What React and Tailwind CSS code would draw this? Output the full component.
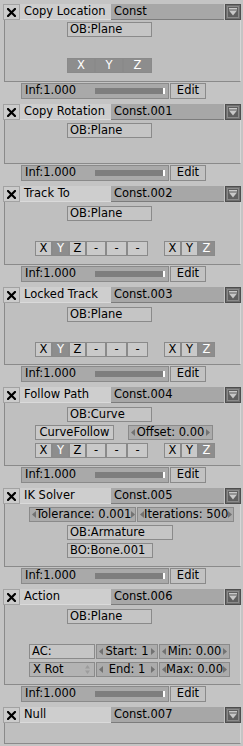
import React from "react";

const XIcon = () => (
  <svg width="9" height="9" viewBox="0 0 9 9">
    <path d="M1 1 L8 8 M8 1 L1 8" stroke="#000" strokeWidth="2.2" strokeLinecap="square" />
  </svg>
);

const DropIcon = () => (
  <svg width="16" height="16" viewBox="0 0 16 16">
    <rect x="0.5" y="0.5" width="15" height="15" fill="#6e6e6e" stroke="#4e4e4e" />
    <rect x="2.5" y="2.5" width="11" height="11" fill="#5f5f5f" stroke="#8a8a8a" />
    <rect x="4" y="4" width="8" height="1.5" fill="#c8c8c8" />
    <path d="M4 6.5 H12 L8 11.5 Z" fill="#c8c8c8" />
  </svg>
);

const ArrowL = () => (
  <svg width="4" height="7" viewBox="0 0 4 7" className="shrink-0">
    <path d="M4 0 V7 L0 3.5 Z" fill="#727272" />
  </svg>
);

const ArrowR = () => (
  <svg width="4" height="7" viewBox="0 0 4 7" className="shrink-0">
    <path d="M0 0 V7 L4 3.5 Z" fill="#727272" />
  </svg>
);

const UpDown = () => (
  <svg width="5" height="9" viewBox="0 0 5 9" className="shrink-0">
    <path d="M0 3.5 H5 L2.5 0 Z M0 5.5 H5 L2.5 9 Z" fill="#9c9c9c" />
  </svg>
);

function Header({ name, cname }) {
  return (
    <div className="flex h-[16px]">
      <div className="ml-[3px] flex w-[17px] items-center justify-center border border-[#a2a2a2] bg-[#cbcbcb]">
        <XIcon />
      </div>
      <div className="flex w-[91px] items-center border-b border-[#dadada] bg-[#cecece] pl-[4px]">{name}</div>
      <div className="flex w-[113px] items-center border-b border-[#7c7c7c] bg-[#a7a7a7] pl-[3px]">{cname}</div>
      <div className="ml-[1px] w-[16px]">
        <DropIcon />
      </div>
    </div>
  );
}

const Field = ({ w, className = "", children }) => (
  <div
    className={`flex h-[15px] shrink-0 items-center border border-[#8a8a8a] bg-[#c5c5c5] pl-[2px] ${className}`}
    style={{ width: w }}
  >
    {children}
  </div>
);

const Tog = ({ w, on, children }) => (
  <div
    className={`flex h-[15px] shrink-0 items-center justify-center border border-[#8a8a8a] ${
      on ? "bg-[#8d8d8d] text-white" : "bg-[#c9c9c9] text-black"
    }`}
    style={{ width: w }}
  >
    {children}
  </div>
);

const Num = ({ w, children }) => (
  <div
    className="flex h-[15px] shrink-0 items-center justify-between border border-[#8a8a8a] bg-[#ababab] px-[2px]"
    style={{ width: w }}
  >
    <ArrowL />
    <span className="whitespace-nowrap">{children}</span>
    <ArrowR />
  </div>
);

const Axes = () => (
  <div className="ml-[30px] flex">
    <Tog w={17}>X</Tog>
    <Tog w={17} on>Y</Tog>
    <Tog w={17}>Z</Tog>
    <Tog w={20}>-</Tog>
    <Tog w={21}>-</Tog>
    <Tog w={21}>-</Tog>
    <div className="w-[16px]" />
    <Tog w={17}>X</Tog>
    <Tog w={17}>Y</Tog>
    <Tog w={17} on>Z</Tog>
  </div>
);

function Panel({ name, cname, h, children }) {
  return (
    <div className="mb-[5px]">
      <Header name={name} cname={cname} />
      <div
        className="ml-[4px] flex w-[237px] flex-col border-x border-b border-l-[#8a8a8a] border-r-[#d6d6d6] border-b-[#8a8a8a] bg-[#bfbfbf]"
        style={{ height: h }}
      >
        {children}
      </div>
      <div className="ml-[21px] mt-[1px] flex h-[16px] gap-[1px]">
        <div className="flex w-[148px] items-center border border-[#8a8a8a] bg-[#a9a9a9] pl-[3px]">
          <span className="w-[70px]">Inf:1.000</span>
          <div className="flex h-[6px] w-[70px] justify-end bg-[#7e7e7e]">
            <div className="h-full w-[2px] bg-white" />
          </div>
        </div>
        <div className="flex w-[36px] items-center justify-center border border-[#8a8a8a] bg-[#c2c2c2]">Edit</div>
      </div>
    </div>
  );
}

export default function App() {
  return (
    <div className="min-h-[746px] w-[243px] overflow-hidden bg-[#c4c4c4] pt-[4px] font-['DejaVu_Sans',sans-serif] text-[11.5px] leading-none text-black">
      <Panel name="Copy Location" cname="Const" h={62}>
        <Field w={85} className="ml-[62px] mt-[2px]">OB:Plane</Field>
        <div className="ml-[62px] mt-[21px] flex">
          <Tog w={28} on>X</Tog>
          <Tog w={28} on>Y</Tog>
          <Tog w={29} on>Z</Tog>
        </div>
      </Panel>

      <Panel name="Copy Rotation" cname="Const.001" h={44}>
        <Field w={85} className="ml-[62px] mt-[3px]">OB:Plane</Field>
      </Panel>

      <Panel name="Track To" cname="Const.002" h={63}>
        <Field w={85} className="ml-[62px] mt-[4px]">OB:Plane</Field>
        <div className="mt-[20px]">
          <Axes />
        </div>
      </Panel>

      <Panel name="Locked Track" cname="Const.003" h={62}>
        <Field w={85} className="ml-[62px] mt-[4px]">OB:Plane</Field>
        <div className="mt-[20px]">
          <Axes />
        </div>
      </Panel>

      <Panel name="Follow Path" cname="Const.004" h={63}>
        <div className="flex flex-col gap-[3px] pt-[4px]">
          <Field w={85} className="ml-[62px]">OB:Curve</Field>
          <div className="ml-[30px] flex gap-[14px]">
            <Tog w={79}>CurveFollow</Tog>
            <Num w={85}>Offset: 0.00</Num>
          </div>
          <Axes />
        </div>
      </Panel>

      <Panel name="IK Solver" cname="Const.005" h={63}>
        <div className="flex flex-col gap-[3px] pt-[3px]">
          <div className="ml-[24px] flex gap-[1px]">
            <Num w={107}>Tolerance: 0.001</Num>
            <Num w={97}>Iterations: 500</Num>
          </div>
          <Field w={106} className="ml-[62px]">OB:Armature</Field>
          <Field w={86} className="ml-[62px]">BO:Bone.001</Field>
        </div>
      </Panel>

      <Panel name="Action" cname="Const.006" h={80}>
        <Field w={85} className="ml-[62px] mt-[4px]">OB:Plane</Field>
        <div className="ml-[24px] mt-[20px] flex gap-[1px]">
          <Field w={66}>AC:</Field>
          <Num w={62}>Start: 1</Num>
          <Num w={71}>Min: 0.00</Num>
        </div>
        <div className="ml-[24px] mt-[3px] flex gap-[1px]">
          <div className="flex h-[15px] w-[66px] items-center justify-between border border-[#8a8a8a] bg-[#b3b3b3] pl-[3px] pr-[4px]">
            <span>X Rot</span>
            <UpDown />
          </div>
          <Num w={62}>End: 1</Num>
          <Num w={71}>Max: 0.00</Num>
        </div>
      </Panel>

      <div>
        <Header name="Null" cname="Const.007" />
        <div className="ml-[4px] h-[21px] w-[237px] border-x border-b border-l-[#8a8a8a] border-r-[#d6d6d6] border-b-[#8a8a8a] bg-[#bfbfbf]" />
      </div>
    </div>
  );
}
